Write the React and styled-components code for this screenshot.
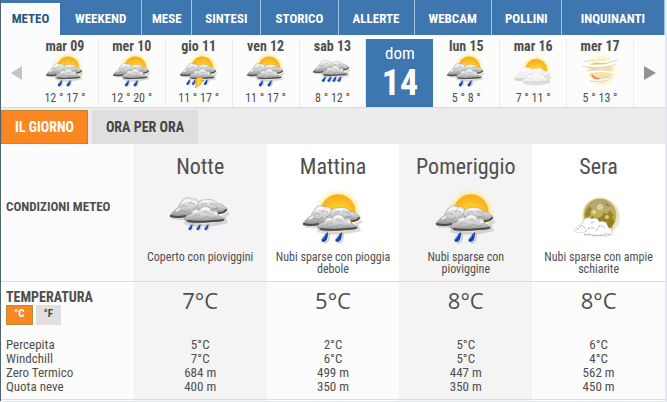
import React, { useId, useState } from 'react';
import styled, { createGlobalStyle } from 'styled-components';

const Global = createGlobalStyle`
  * { box-sizing: border-box; }
  body {
    margin: 0;
    background: #dfe8f3;
    color: #4f4f4f;
    font-family: "Roboto Condensed", "Liberation Sans Narrow", Roboto, sans-serif;
    font-size: 13px;
    line-height: 14px;
  }
  button { font: inherit; cursor: pointer; }
  a { color: inherit; text-decoration: none; }
`;

const Page = styled.main`
  margin-right: 2px;
  border-left: 1px solid #4c6673;
  background: #fcfcfc;
`;

const Tabs = styled.nav`
  display: grid;
  grid-template-columns: 59fr 82fr 50fr 69fr 77fr 76fr 77fr 70fr 103fr;
  height: 35px;
  background: #3e76af;
`;

const Tab = styled.a`
  display: flex;
  align-items: center;
  justify-content: center;
  padding-top: ${(p) => (p.$active ? 0 : 3)}px;
  margin-top: ${(p) => (p.$active ? 3 : 0)}px;
  background: ${(p) => (p.$active ? '#fcfcfc' : 'transparent')};
  color: ${(p) => (p.$active ? '#23557f' : '#fff')};
  border-right: ${(p) => (p.$active ? 0 : 1)}px solid #a9c4df;
  font-size: 13px;
  font-weight: 700;
  white-space: nowrap;
`;

const Strip = styled.section`
  display: grid;
  grid-template-columns: 31fr repeat(9, 67fr) 31fr;
  padding-top: 4px;
  height: 73px;
  border-bottom: 1px solid #dadada;
`;

const Arrow = styled.button`
  display: flex;
  align-items: center;
  justify-content: center;
  padding: 0;
  border: 0;
  background: none;
  color: ${(p) => (p.$dim ? '#c4c4c4' : '#939393')};
`;

const Day = styled.a`
  display: flex;
  flex-direction: column;
  align-items: center;
  border-right: 1px solid #ebebeb;
  white-space: nowrap;
`;

const DayName = styled.strong`
  font-size: 14px;
`;

const Range = styled.span`
  margin-top: 3px;
  font-size: 12px;
`;

const Today = styled(Day)`
  border: 0;
  background: #3e76af;
  color: #fff;
  font-size: 17px;
  line-height: 28px;
`;

const TodayNumber = styled.strong`
  font-size: 36px;
  line-height: 32px;
`;

const ModeBar = styled.div`
  display: flex;
  gap: 4px;
  padding-top: 2px;
  background: #ececec;
`;

const Mode = styled.button`
  height: 34px;
  padding: 0 13px;
  border: 1px solid ${(p) => (p.$active ? '#b88a35' : '#dfdfdf')};
  background: ${(p) => (p.$active ? '#fa8722' : '#dfdfdf')};
  color: ${(p) => (p.$active ? '#fff' : '#444')};
  font-size: 14px;
  font-weight: 700;
`;

const Table = styled.table`
  width: 100%;
  table-layout: fixed;
  border-collapse: collapse;
  text-align: center;

  tr > :nth-child(odd):not(:first-child) { background: #fff; }
  tr > :nth-child(even) { background: #f4f4f4; }
`;

const Conditions = styled.tr`
  border-bottom: 1px solid #dcdcdc;
  vertical-align: top;
`;

const Readings = styled.tbody`
  border-bottom: 1px solid #dcdcdc;
  && tr > :nth-child(odd) { background: #fcfcfc; }
`;

const RowLabel = styled.th`
  padding: 0 0 0 5px;
  text-align: left;
  vertical-align: middle;
  font-size: 13px;
  font-weight: 400;
  white-space: nowrap;
`;

const ConditionsLabel = styled(RowLabel)`
  padding-bottom: 10px;
  font-weight: 700;
`;

const TempLabel = styled(RowLabel)`
  padding-top: 8px;
  vertical-align: top;
  font-size: 14px;
  font-weight: 700;
`;

const Period = styled.td`
  height: 137px;
  padding: 11px 6px 0;
`;

const PeriodName = styled.h2`
  margin: 0 0 10px;
  font-size: 22px;
  font-weight: 400;
  line-height: 24px;
`;

const Caption = styled.p`
  margin: 6px 0 0;
  font-size: 12px;
  line-height: 12px;
`;

const Temp = styled.td`
  height: 57px;
  padding: 6px 0 0;
  vertical-align: top;
  font-family: "Open Sans", sans-serif;
  font-size: 22px;
  line-height: 24px;
`;

const Value = styled.td`
  height: 14px;
  padding: 0;
`;

const Gap = styled.td`
  height: ${(p) => p.$size}px;
  padding: 0;
`;

const Units = styled.div`
  display: flex;
  gap: 3px;
  margin-top: 1px;
`;

const Unit = styled.button`
  height: 20px;
  padding: 0 7px 2px;
  border: 1px solid ${(p) => (p.$active ? '#b88a35' : '#dfdfdf')};
  background: ${(p) => (p.$active ? '#fa8722' : '#dfdfdf')};
  color: ${(p) => (p.$active ? '#fff' : '#444')};
  font-size: 11px;
  font-weight: 700;
`;

const Drawing = styled.svg`
  display: block;
  width: ${(p) => (p.$small ? 40 : 64)}px;
  height: ${(p) => (p.$small ? 35 : 56)}px;
  margin: 0 auto;
  flex: none;
`;

const LEFT = 'M2 34C5 31 6 29 10 27C11 23 13 22 14 20C16 16 21 16 24 18C27 17 31 19 31 22C35 23 34 29 31 30L20 35C14 37 5 37 2 36Z';
const RIGHT = 'M29 25C30 20 34 18 38 19C43 17 48 20 49 23C53 22 56 24 56 26C60 26 60 30 57 31C49 34 38 32 32 30Z';
const FRONT = 'M16 38C17 34 21 34 23 33C23 29 28 27 31 29C34 24 42 25 44 30C48 28 51 31 50 34L57 38C55 41 49 41 44 41L27 42C22 42 18 41 16 38Z';

function Clouds({ id, white, dy = 0 }) {
  const fill = `url(#${id}${white ? 'w' : 'c'})`;
  const edge = white ? '#c4c4c4' : '#8f8f8f';
  return (
    <g transform={`translate(0 ${dy})`}>
      <path d="M4 37L20 38 18 42C28 46 46 44 58 41L56 35 61 32" fill="none" stroke="#777" strokeOpacity=".25" strokeWidth="3" />
      <g fill={fill} stroke={edge} strokeWidth=".5">
        <path d={LEFT} />
        <path d={RIGHT} />
        <path d={FRONT} />
      </g>
      <g fill="none" stroke={white ? '#aaa' : '#4c4c4c'} strokeWidth={white ? 0.8 : 2} strokeLinecap="round">
        <path d="M3 35Q10 37 17 35M51 32Q56 32 58 29M20 40Q31 42 55 39" />
      </g>
      <g fill="none" stroke={white ? '#d2d2d2' : '#929292'} strokeWidth="1" opacity=".6">
        <path d="M12 26q5-3 7 0M20 23q4-3 7 0M9 31l5-2 3 2 5-3M25 28l4-2M33 25q3-4 6-1M42 23q5-1 7 3M44 28l7-1M25 36q4-4 7-1M35 31q4-2 6 2M34 38l5-3 4 3 6-2" />
      </g>
      <g fill="none" stroke="#fff" strokeWidth="1.5" opacity=".85">
        <path d="M15 22q3-4 7-2M24 21q3-1 5 2M35 21q4-2 6 0M26 31l4-1M34 29q4-4 7 0M8 30l4-2M46 33l3 0" />
      </g>
    </g>
  );
}

function Drops({ at, y, size = 1 }) {
  return at.map((x) => (
    <g key={x} transform={`translate(${x} ${y}) scale(${size})`}>
      <path d="M5 1C6 7 4 11 0 11" fill="none" stroke="#888" strokeOpacity=".4" strokeWidth="1.5" />
      <path d="M4 0C4 6 3 10-1 10C-5 9-1 4 4 0Z" fill="#1346ae" />
      <path d="M-2 7L1 3" stroke="#9fc5fa" strokeWidth="1.2" />
    </g>
  ));
}

function Sun({ id, y = 23, r = 17 }) {
  const rays = Array.from({ length: 24 }, (_, i) => (i * Math.PI) / 12);
  return (
    <g>
      <circle cx="37" cy={y} r={r + 7} fill={`url(#${id}h)`} />
      <g stroke="#fae383" strokeWidth=".7" opacity=".5">
        {rays.map((a, i) => {
          const far = r + (i % 2 ? 4 : 7);
          return <line key={a} x1={37 + r * Math.cos(a)} y1={y + r * Math.sin(a)} x2={37 + far * Math.cos(a)} y2={y + far * Math.sin(a)} />;
        })}
      </g>
      <circle cx="37" cy={y} r={r} fill={`url(#${id}s)`} stroke="#f7b420" strokeWidth="1.3" />
    </g>
  );
}

function Moon({ id }) {
  return (
    <g>
      <circle cx="35" cy="28" r="18" fill="#777" opacity=".18" />
      <circle cx="33" cy="26" r="17" fill={`url(#${id}m)`} stroke="#eee3a0" strokeWidth="1.6" />
      <g fill="#766712" opacity=".55">
        <path d="M18 25l2-5 3-3 2 3-2 3 1 3-3 2-2 5z" />
        <path d="M31 29l4-2 2-4 3 2 3-4 4 5-2 3 3 4-4 4-3 5-5-4-4 1-4-3z" />
        <path d="M22 29l4-2 3 4-4 3-4-1zM38 14l3 1 2 3-3-1zM43 38l4-5-2 7z" />
      </g>
      <g fill="#eee2a2" opacity=".75">
        <circle cx="33" cy="18" r="3" /><circle cx="40" cy="28" r="2" /><circle cx="27" cy="23" r="2" /><circle cx="39" cy="34" r="1" /><circle cx="30" cy="31" r="1" />
      </g>
      <path d="M7 42C10 37 12 36 16 34C17 28 22 28 25 30C28 28 32 31 32 33C38 31 40 35 41 38L46 43 43 46 39 44 34 47 26 46 20 46 16 43 11 44Z" fill="#fff" stroke="#ccc" strokeWidth=".7" />
      <path d="M10 41l5-5 4 4M18 43q5-7 10-3M29 42l4-6 5 3M24 34l4-2M17 46l6-1 4 2 7-1 4 1 7-2" fill="none" stroke="#999" strokeWidth=".8" strokeDasharray="3 1" />
    </g>
  );
}

function Haze({ id }) {
  return (
    <g>
      <circle cx="34" cy="28" r="27" fill={`url(#${id}h)`} opacity=".8" />
      <circle cx="34" cy="28" r="18" fill="#f9e1a8" />
      <path d="M18 33q7 9 15 9l15-3M18 19q13-6 30 1" stroke="#ecb879" strokeWidth="3" fill="none" opacity=".7" />
      <path d="M20 26q12 5 27 1" stroke="#f3cc80" strokeWidth="3" fill="none" />
      <g fill="none" stroke="#fff" strokeLinecap="round">
        <path d="M6 18Q24 25 54 17M10 32Q29 25 55 31M12 41Q31 47 54 39" strokeWidth="4" />
        <path d="M13 11Q31 17 58 11" strokeWidth="3" />
      </g>
      <g fill="none" stroke="#cfc4b5" strokeWidth="1">
        <path d="M7 14q7-3 17-2M3 21q20 5 47 0l8-4M12 29q17-4 38 0M15 44q20 5 38-5M46 15l15-4" />
      </g>
      <path d="M19 36q6 7 12 5" stroke="#d9786c" strokeWidth="2" fill="none" />
    </g>
  );
}

function WeatherIcon({ kind, small }) {
  const id = useId().replace(/[^a-zA-Z0-9]/g, '');
  return (
    <Drawing $small={small} viewBox="0 0 64 56" aria-hidden="true">
      <defs>
        <linearGradient id={`${id}c`} x1="0" y1="0" x2="0" y2="1">
          <stop offset="0" stopColor="#f3f3f3" /><stop offset=".55" stopColor="#cdcdcd" /><stop offset="1" stopColor="#868686" />
        </linearGradient>
        <linearGradient id={`${id}w`} x1="0" y1="0" x2="0" y2="1">
          <stop offset="0" stopColor="#fff" /><stop offset="1" stopColor="#ededed" />
        </linearGradient>
        <radialGradient id={`${id}s`} cx=".5" cy=".65" r=".65">
          <stop offset="0" stopColor="#ffe23a" /><stop offset=".55" stopColor="#fec926" /><stop offset="1" stopColor="#faa91c" />
        </radialGradient>
        <radialGradient id={`${id}h`}>
          <stop offset=".6" stopColor="#ffe66b" stopOpacity=".8" /><stop offset="1" stopColor="#ffef98" stopOpacity="0" />
        </radialGradient>
        <linearGradient id={`${id}m`} x1="0" y1="0" x2="0" y2="1">
          <stop offset="0" stopColor="#a9a283" /><stop offset=".5" stopColor="#c2b256" /><stop offset="1" stopColor="#a18b20" />
        </linearGradient>
      </defs>
      {kind === 'moon' && <Moon id={id} />}
      {kind === 'haze' && <Haze id={id} />}
      {kind === 'fair' && <><Sun id={id} y={27} /><Clouds id={id} white dy={6} /></>}
      {kind === 'drizzle' && <><Clouds id={id} dy={-8} /><Drops at={[22, 30, 38]} y={35} size={0.6} /></>}
      {kind === 'rain' && <><Clouds id={id} dy={-5} /><Drops at={[18, 27, 35, 43]} y={37} size={0.9} /></>}
      {kind === 'showers' && <><Sun id={id} /><Clouds id={id} /><Drops at={[23, 37]} y={43} /></>}
      {kind === 'storm' && (
        <>
          <Sun id={id} /><Clouds id={id} /><Drops at={[14, 23, 42]} y={42} size={0.9} />
          <path d="M29 40l10-1-4 5 5 0-7 5 2 1-9 6 2-7-4 0 5-4-4 0z" fill="#ffd238" stroke="#d98b1d" />
        </>
      )}
    </Drawing>
  );
}

const tabs = ['METEO', 'WEEKEND', 'MESE', 'SINTESI', 'STORICO', 'ALLERTE', 'WEBCAM', 'POLLINI', 'INQUINANTI'];

const days = [
  { name: 'mar 09', kind: 'showers', range: '12 ° 17 °' },
  { name: 'mer 10', kind: 'showers', range: '12 ° 20 °' },
  { name: 'gio 11', kind: 'storm', range: '11 ° 17 °' },
  { name: 'ven 12', kind: 'showers', range: '11 ° 17 °' },
  { name: 'sab 13', kind: 'rain', range: '8 ° 12 °' },
  { name: 'dom', number: 14 },
  { name: 'lun 15', kind: 'showers', range: '5 ° 8 °' },
  { name: 'mar 16', kind: 'fair', range: '7 ° 11 °' },
  { name: 'mer 17', kind: 'haze', range: '5 ° 13 °' },
];

const periods = [
  { name: 'Notte', kind: 'drizzle', text: 'Coperto con pioviggini', temp: '7°C' },
  { name: 'Mattina', kind: 'showers', text: 'Nubi sparse con pioggia debole', temp: '5°C' },
  { name: 'Pomeriggio', kind: 'showers', text: 'Nubi sparse con pioviggine', temp: '8°C' },
  { name: 'Sera', kind: 'moon', text: 'Nubi sparse con ampie schiarite', temp: '8°C' },
];

const readings = [
  ['Percepita', '5°C', '2°C', '5°C', '6°C'],
  ['Windchill', '7°C', '6°C', '5°C', '4°C'],
  ['Zero Termico', '684 m', '499 m', '447 m', '562 m'],
  ['Quota neve', '400 m', '350 m', '350 m', '450 m'],
];

function GapRow({ size }) {
  return <tr>{[0, 1, 2, 3, 4].map((i) => <Gap key={i} $size={size} />)}</tr>;
}

export default function App() {
  const [mode, setMode] = useState('IL GIORNO');
  const [unit, setUnit] = useState('°C');
  return (
    <>
      <Global />
      <Page>
        <Tabs>
          {tabs.map((t, i) => <Tab key={t} href="#" $active={i === 0}>{t}</Tab>)}
        </Tabs>
        <Strip>
          <Arrow $dim aria-label="Giorni precedenti">
            <svg width="11" height="14" viewBox="0 0 11 14"><path d="M11 0V14L0 7Z" fill="currentColor" /></svg>
          </Arrow>
          {days.map((d) => d.number ? (
            <Today key={d.name} href="#">
              <span>{d.name}</span>
              <TodayNumber>{d.number}</TodayNumber>
            </Today>
          ) : (
            <Day key={d.name} href="#">
              <DayName>{d.name}</DayName>
              <WeatherIcon small kind={d.kind} />
              <Range>{d.range}</Range>
            </Day>
          ))}
          <Arrow aria-label="Giorni successivi">
            <svg width="12" height="14" viewBox="0 0 12 14"><path d="M0 0L12 7L0 14Z" fill="currentColor" /></svg>
          </Arrow>
        </Strip>
        <ModeBar>
          {['IL GIORNO', 'ORA PER ORA'].map((m) => (
            <Mode key={m} $active={mode === m} onClick={() => setMode(m)}>{m}</Mode>
          ))}
        </ModeBar>
        <Table>
          <tbody>
            <Conditions>
              <ConditionsLabel scope="row">CONDIZIONI METEO</ConditionsLabel>
              {periods.map((p) => (
                <Period key={p.name}>
                  <PeriodName>{p.name}</PeriodName>
                  <WeatherIcon kind={p.kind} />
                  <Caption>{p.text}</Caption>
                </Period>
              ))}
            </Conditions>
          </tbody>
          <Readings>
            <tr>
              <TempLabel scope="row">
                TEMPERATURA
                <Units>
                  {['°C', '°F'].map((u) => (
                    <Unit key={u} $active={unit === u} onClick={() => setUnit(u)}>{u}</Unit>
                  ))}
                </Units>
              </TempLabel>
              {periods.map((p) => <Temp key={p.name}>{p.temp}</Temp>)}
            </tr>
            {readings.map(([label, ...values]) => (
              <tr key={label}>
                <RowLabel scope="row">{label}</RowLabel>
                {values.map((v, i) => <Value key={i}>{v}</Value>)}
              </tr>
            ))}
            <GapRow size={5} />
          </Readings>
          <tbody>
            <GapRow size={2} />
          </tbody>
        </Table>
      </Page>
    </>
  );
}
